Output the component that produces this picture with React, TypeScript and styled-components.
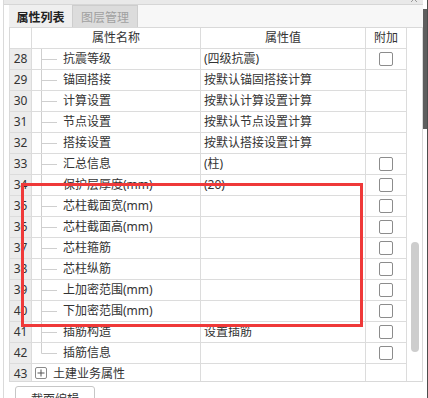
import React from "react";
import styled, { createGlobalStyle } from "styled-components";

const GlobalStyle = createGlobalStyle`
  html, body { margin: 0; padding: 0; background: #fff; }
  body {
    font-family: "Noto Sans", "Noto Sans CJK SC", sans-serif;
    font-size: 12px;
    color: #333;
  }
  * { box-sizing: border-box; }
`;

const Frame = styled.div`
  width: 428px;
  height: 398px;
  overflow: hidden;
  position: relative;
  display: flex;
  background: #fff;
`;

const Panel = styled.div`
  width: 420px;
  margin-left: 3px;
  border-left: 1px solid #dadada;
  display: flex;
  flex-direction: column;
`;

const TopStrip = styled.div`
  height: 5px;
  flex: none;
  background: #e9e9e9;
  border-bottom: 1px solid #d6d6d6;
  overflow: hidden;
  display: flex;
  justify-content: flex-end;
  padding-right: 5px;
`;

const CloseMark = styled.svg`
  width: 8px;
  height: 8px;
  margin-top: -5px;
`;

const Body = styled.div`
  padding-left: 5px;
  display: flex;
  flex-direction: column;
`;

const TabBar = styled.div`
  height: 22px;
  display: flex;
  background: #f7f7f7;
`;

const Tab = styled.div<{ $active?: boolean }>`
  width: ${(p) => (p.$active ? "63px" : "66px")};
  display: flex;
  align-items: center;
  justify-content: center;
  font-family: "Noto Sans CJK SC", sans-serif;
  font-size: 12px;
  font-weight: ${(p) => (p.$active ? 700 : 400)};
  color: ${(p) => (p.$active ? "#222" : "#a0a0a0")};
  background: ${(p) => (p.$active ? "#efefef" : "#dcdcdc")};
  border: ${(p) => (p.$active ? "none" : "1px solid #cdcdcd")};
  border-bottom: none;
`;

const Table = styled.div`
  height: 355px;
  border: 1px solid #d9d9d9;
  display: flex;
  overflow: hidden;
`;

const Grid = styled.div`
  width: 397px;
  display: grid;
  grid-template-columns: 22px 169px 165px 41px;
  grid-auto-rows: 21px;
  align-content: start;
`;

const Cell = styled.div<{ $kind?: "num" | "name" | "value" | "add" | "head" }>`
  border-right: 1px solid #dcdcdc;
  border-bottom: 1px solid #dcdcdc;
  display: flex;
  align-items: center;
  line-height: 20px;
  white-space: nowrap;
  overflow: hidden;
  font-family: "Noto Sans", "Noto Sans CJK SC", sans-serif;
  font-size: 12px;
  color: #333;
  background: ${(p) => (p.$kind === "num" ? "#ececec" : "#fff")};
  justify-content: ${(p) =>
    p.$kind === "num" || p.$kind === "add" || p.$kind === "head"
      ? "center"
      : "flex-start"};
  padding-left: ${(p) =>
    p.$kind === "value" ? "3px" : p.$kind === "name" ? "9px" : "0"};
`;

const Guide = styled.svg`
  width: 22px;
  height: 20px;
  flex: none;
  align-self: flex-start;
`;

const GroupCell = styled(Cell)`
  padding-left: 3px;
`;

const Expander = styled.span`
  width: 12px;
  height: 12px;
  border: 1px solid #8a8a8a;
  border-radius: 2px;
  margin-right: 6px;
  display: flex;
  align-items: center;
  justify-content: center;
  flex: none;
  position: relative;
  top: -1px;
`;

const Check = styled.span`
  width: 14px;
  height: 14px;
  border: 1px solid #8c8c8c;
  border-radius: 2px;
  background: #fff;
`;

const Track = styled.div`
  width: 15px;
  padding-top: 214px;
  padding-left: 4px;
`;

const Thumb = styled.div`
  width: 8px;
  height: 110px;
  border-radius: 4px;
  background: #cdcdcd;
`;

const Footer = styled.div`
  padding: 4px 0 0 6px;
`;

const Button = styled.div`
  width: 80px;
  height: 24px;
  border: 1px solid #c6c6c6;
  border-radius: 3px;
  background: #fff;
  display: flex;
  align-items: center;
  justify-content: center;
  font-family: "Noto Sans CJK SC", sans-serif;
  font-size: 12px;
  color: #333;
`;

const OuterEdge = styled.div`
  width: 5px;
  border-right: 1px solid #4d4d4d;
  padding-top: 9px;
`;

const EdgeThumb = styled.div`
  height: 120px;
  background: #5e5e5e;
`;

const Highlight = styled.div`
  position: absolute;
  left: 21px;
  top: 183px;
  width: 342px;
  height: 144px;
  border: 3px solid #ef3939;
  pointer-events: none;
`;

type Row = { n: number; name: string; value: string; check: boolean };

const rows: Row[] = [
  { n: 28, name: "抗震等级", value: "(四级抗震)", check: true },
  { n: 29, name: "锚固搭接", value: "按默认锚固搭接计算", check: false },
  { n: 30, name: "计算设置", value: "按默认计算设置计算", check: false },
  { n: 31, name: "节点设置", value: "按默认节点设置计算", check: false },
  { n: 32, name: "搭接设置", value: "按默认搭接设置计算", check: false },
  { n: 33, name: "汇总信息", value: "(柱)", check: true },
  { n: 34, name: "保护层厚度(mm)", value: "(20)", check: true },
  { n: 35, name: "芯柱截面宽(mm)", value: "", check: true },
  { n: 36, name: "芯柱截面高(mm)", value: "", check: true },
  { n: 37, name: "芯柱箍筋", value: "", check: true },
  { n: 38, name: "芯柱纵筋", value: "", check: true },
  { n: 39, name: "上加密范围(mm)", value: "", check: true },
  { n: 40, name: "下加密范围(mm)", value: "", check: true },
  { n: 41, name: "插筋构造", value: "设置插筋", check: true },
  { n: 42, name: "插筋信息", value: "", check: true },
];

const TreeLine = ({ last }: { last?: boolean }) => (
  <Guide viewBox="0 0 22 20">
    <line x1="0.5" y1="0" x2="0.5" y2={last ? 10.5 : 21} stroke="#cfcfcf" strokeWidth="1" />
    <line x1="0.5" y1="10.5" x2="16" y2="10.5" stroke="#cfcfcf" strokeWidth="1" />
  </Guide>
);

export default function App() {
  return (
    <>
      <GlobalStyle />
      <Frame>
        <Panel>
          <TopStrip>
            <CloseMark viewBox="0 0 8 8">
              <path d="M1 1 L7 7 M7 1 L1 7" stroke="#9a9a9a" strokeWidth="1" />
            </CloseMark>
          </TopStrip>
          <Body>
            <TabBar>
              <Tab $active>属性列表</Tab>
              <Tab>图层管理</Tab>
            </TabBar>
            <Table>
              <Grid>
                <Cell $kind="head" />
                <Cell $kind="head">属性名称</Cell>
                <Cell $kind="head">属性值</Cell>
                <Cell $kind="head">附加</Cell>
                {rows.map((r, i) => (
                  <React.Fragment key={r.n}>
                    <Cell $kind="num">{r.n}</Cell>
                    <Cell $kind="name">
                      <TreeLine last={i === rows.length - 1} />
                      {r.name}
                    </Cell>
                    <Cell $kind="value">{r.value}</Cell>
                    <Cell $kind="add">{r.check && <Check />}</Cell>
                  </React.Fragment>
                ))}
                <Cell $kind="num">43</Cell>
                <GroupCell>
                  <Expander>
                    <svg width="8" height="8" viewBox="0 0 8 8">
                      <path d="M4 0.5 V7.5 M0.5 4 H7.5" stroke="#555" strokeWidth="1" />
                    </svg>
                  </Expander>
                  土建业务属性
                </GroupCell>
                <Cell $kind="value" />
                <Cell $kind="add" />
              </Grid>
              <Track>
                <Thumb />
              </Track>
            </Table>
            <Footer>
              <Button>截面编辑</Button>
            </Footer>
          </Body>
        </Panel>
        <OuterEdge>
          <EdgeThumb />
        </OuterEdge>
        <Highlight />
      </Frame>
    </>
  );
}
